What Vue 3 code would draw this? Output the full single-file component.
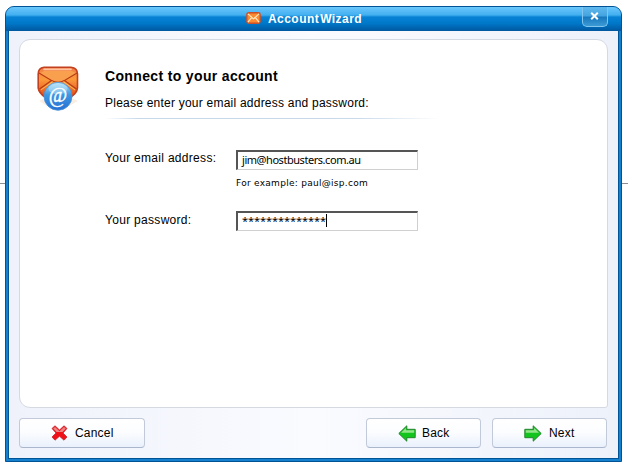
<script setup>
import { ref } from "vue";

const email = ref("jim@hostbusters.com.au");
const password = ref("**************");
</script>


<template>
    <div class="page">
        <div class="side-line"></div>
        <div class="window">
            <div class="title-bar">
                <div class="title">
                    <svg class="title-icon" width="15" height="12" viewBox="0 0 16 13">
                        <rect x="0.8" y="0.8" width="14.4" height="11.4" rx="2" fill="#fb8a30" stroke="#c8502a" stroke-width="1.4" />
                        <path d="M2 2L8 7.5L14 2M2 11L6 6M14 11L10 6" fill="none" stroke="#ffe8bd" stroke-width="1.3" />
                    </svg>
                    <div class="title-text"><span>Account</span><span>Wizard</span></div>
                </div>
                <button class="close" aria-label="Close">
                    <svg width="9" height="8" viewBox="0 0 9 8">
                        <path d="M1.2 0.8L7.8 7.2M7.8 0.8L1.2 7.2" stroke="#ffffff" stroke-width="2" />
                    </svg>
                </button>
            </div>
            <div class="content">
                <div class="panel">
                    <svg class="mail-icon" width="44" height="50" viewBox="0 0 44 50">
                        <defs>
                            <linearGradient id="envelope" x1="0" y1="0" x2="0" y2="1">
                                <stop offset="0" stop-color="#f07a48" />
                                <stop offset="0.4" stop-color="#fb9b3c" />
                                <stop offset="1" stop-color="#e24a1a" />
                            </linearGradient>
                            <linearGradient id="ball" x1="0" y1="0" x2="0" y2="1">
                                <stop offset="0" stop-color="#a9e0f8" />
                                <stop offset="0.45" stop-color="#3c96e2" />
                                <stop offset="1" stop-color="#2470d2" />
                            </linearGradient>
                        </defs>
                        <path d="M2 35L10 31L32 31L41 35L32 40L10 40Z" fill="#faeee2" />
                        <path d="M7 1.2H34Q40.5 2 40.5 8V22Q40 27 34 31H8Q2 27 1.2 22V8Q1.2 2 7 1.2Z" fill="url(#envelope)" stroke="#c2401e" stroke-width="1.6" stroke-linejoin="round" />
                        <path d="M7 3.4H34" fill="none" stroke="#ffc3a0" stroke-width="1.6" stroke-linecap="round" />
                        <path d="M2.5 8L18 16.3Q21 17.5 24 16.3L39.5 8V7.5L35 5H7L2.5 7.5Z" fill="#f9a04e" />
                        <path d="M2 7L14.5 14.5L2.5 23M40 7L27.5 14.5L39.5 23" fill="none" stroke="#b93b12" stroke-width="1.2" />
                        <path d="M14.5 14.5Q21 18 27.5 14.5" fill="none" stroke="#b93b12" stroke-width="1.2" />
                        <path d="M4 23.8L15.5 15.8M38 23.8L26.5 15.8" fill="none" stroke="#ffc15c" stroke-width="0.9" />
                        <circle cx="21" cy="30.3" r="14" fill="url(#ball)" stroke="#4b93d8" stroke-width="0.8" />
                        <ellipse cx="21" cy="22.8" rx="9.5" ry="5.5" fill="#e4f8ff" opacity="0.35" />
                        <text x="21" y="35.5" text-anchor="middle" font-family="Liberation Serif, serif" font-size="20" fill="#ffffff" stroke="#ffffff" stroke-width="0.4">@</text>
                    </svg>
                    <div class="form">
                        <h1>Connect to your account</h1>
                        <p class="intro">Please enter your email address and password:</p>
                        <div class="divider"></div>
                        <div class="row email-row">
                            <label>Your email address:</label>
                            <div>
                                <div class="field">{{ email }}</div>
                                <div class="hint">For example: paul@isp.com</div>
                            </div>
                        </div>
                        <div class="row">
                            <label class="password-label">Your password:</label>
                            <div class="field stars">{{ password }}<span class="caret"></span></div>
                        </div>
                    </div>
                </div>
                <div class="buttons">
                    <button class="cancel">
                        <svg width="17" height="16" viewBox="0 0 17 16">
                            <path d="M1 3.5L4 0.8L8.5 5L13 0.8L16 3.5L12 8L16 12L13 15.2L8.5 11.2L4 15.2L1 12L5 8Z" fill="#f01018" stroke="#c42730" stroke-width="0.8" />
                            <path d="M2.2 3.5L4 2L8.5 6.2L13 2L14.8 3.5L11.5 7H5.5Z" fill="#ee8585" />
                        </svg>
                        <span>Cancel</span>
                    </button>
                    <button class="back">
                        <svg width="18" height="17" viewBox="0 0 18 17">
                            <path d="M0.8 8.5L8.8 0.8V4.3H17.2V12.7H8.8V16.2Z" fill="#12c51c" stroke="#23852c" stroke-width="1" />
                            <path d="M3 7.8L7.9 3V5.3H16.2V7.8Z" fill="#94e58b" />
                        </svg>
                        <span>Back</span>
                    </button>
                    <button class="next">
                        <svg width="18" height="17" viewBox="0 0 18 17">
                            <path d="M17.2 8.5L9.2 0.8V4.3H0.8V12.7H9.2V16.2Z" fill="#12c51c" stroke="#23852c" stroke-width="1" />
                            <path d="M15 7.8L10.1 3V5.3H1.8V7.8Z" fill="#94e58b" />
                        </svg>
                        <span>Next</span>
                    </button>
                </div>
            </div>
        </div>
        <div class="side-line"></div>
    </div>
</template>


<style>
body {
    margin: 0;
    background-color: white;
}
</style>

<style scoped>
.page {
    display: grid;
    grid-template-columns: 5px 617px 6px;
    box-sizing: border-box;
    height: 467px;
    padding-top: 6px;
    overflow: hidden;
    font-family: "Liberation Sans", Arial, sans-serif;
    font-size: 12px;
    color: black;
}
.side-line {
    height: 1px;
    margin-top: 177px;
    background-color: #8b8f94;
}
.window {
    display: flex;
    flex-direction: column;
    box-sizing: border-box;
    height: 456px;
    border: 1px solid #005394;
    border-radius: 9px 9px 0 0;
    background-color: #1480ce;
    overflow: hidden;
}
.title-bar {
    display: grid;
    grid-template-columns: 1fr 26px;
    height: 24px;
    padding-right: 13px;
    background: linear-gradient(#6bc7fb 0, #43aff0 8px, #0782d5 10px, #0079ca 16px, #00579f 24px);
}
.title {
    display: flex;
    align-items: center;
    gap: 7px;
    padding-left: 240px;
    color: white;
    font-size: 12px;
    font-weight: bold;
}
.title-icon {
    margin-bottom: 2px;
}
.title-text {
    display: flex;
    gap: 1px;
    letter-spacing: 0.45px;
    white-space: nowrap;
}
.close {
    display: flex;
    align-items: center;
    justify-content: center;
    box-sizing: border-box;
    height: 20px;
    padding: 0 2px 1px 0;
    border: 1px solid #82c5ef;
    border-top: 0;
    border-radius: 0 0 5px 5px;
    background: linear-gradient(#61b9ee 0, #43a3df 9px, #1777bd 10px, #3c9bd4 19px);
}
.content {
    flex: 1;
    display: flex;
    flex-direction: column;
    box-sizing: border-box;
    margin: 0 2px 2px;
    padding: 8px 10px 0;
    border: 1px solid #005394;
    border-top: 0;
    background: linear-gradient(90deg, #eff2fb, #fafbff 50%, #edf1fa);
}
.panel {
    display: flex;
    box-sizing: border-box;
    height: 369px;
    padding: 26px 0 0 17px;
    border: 1px solid #d5d9e2;
    border-radius: 11px 11px 3px 11px;
    background-color: white;
}
.mail-icon {
    flex: none;
}
.form {
    padding-left: 24px;
}
h1 {
    margin: 1px 0 0;
    font-size: 14px;
    line-height: 18px;
    letter-spacing: 0.35px;
    white-space: nowrap;
}
.intro {
    margin: 10px 0 0;
    line-height: 16px;
    letter-spacing: 0.23px;
    white-space: nowrap;
}
.divider {
    width: 336px;
    height: 1px;
    margin-top: 7px;
    background: linear-gradient(90deg, white, #c6d8ea 10%, #c9d9ea 75%, white);
}
.row {
    display: grid;
    grid-template-columns: 131px 182px;
}
.email-row {
    height: 61px;
    margin-top: 31px;
}
label {
    line-height: 16px;
    white-space: nowrap;
    letter-spacing: 0.3px;
}
.password-label {
    padding-top: 1px;
}
.field {
    display: flex;
    align-items: center;
    box-sizing: border-box;
    height: 20px;
    padding: 0 0 1px 4px;
    border: 1px solid #d0d0d0;
    border-top: 2px solid #555555;
    border-left: 2px solid #555555;
    font-family: "Noto Sans", sans-serif;
    font-size: 11px;
    line-height: 16px;
    letter-spacing: -0.45px;
    white-space: nowrap;
}
.stars {
    letter-spacing: -0.06px;
    padding-bottom: 2px;
}
.caret {
    width: 1px;
    height: 13px;
    background-color: black;
}
.hint {
    margin-top: 6px;
    font-family: "DejaVu Sans", sans-serif;
    font-size: 9px;
    line-height: 14px;
    letter-spacing: 0.28px;
    white-space: nowrap;
}
.buttons {
    display: flex;
    margin-top: 10px;
}
.buttons button {
    display: flex;
    align-items: center;
    gap: 8px;
    box-sizing: border-box;
    width: 115px;
    height: 30px;
    padding: 0 0 0 31px;
    border: 1px solid #c2cad9;
    border-bottom-color: #aab6cb;
    border-radius: 4px;
    background: linear-gradient(white, #fcfdff 45%, #eaf1fc);
    font-family: "Liberation Sans", Arial, sans-serif;
    font-size: 12px;
    letter-spacing: 0.2px;
    color: black;
}
.buttons .cancel {
    width: 126px;
}
.buttons .cancel span {
    margin-left: -1px;
}
.buttons .back {
    margin-left: auto;
    margin-right: 11px;
    gap: 6px;
}
.buttons .next {
    margin-right: 1px;
    gap: 7px;
}
</style>
